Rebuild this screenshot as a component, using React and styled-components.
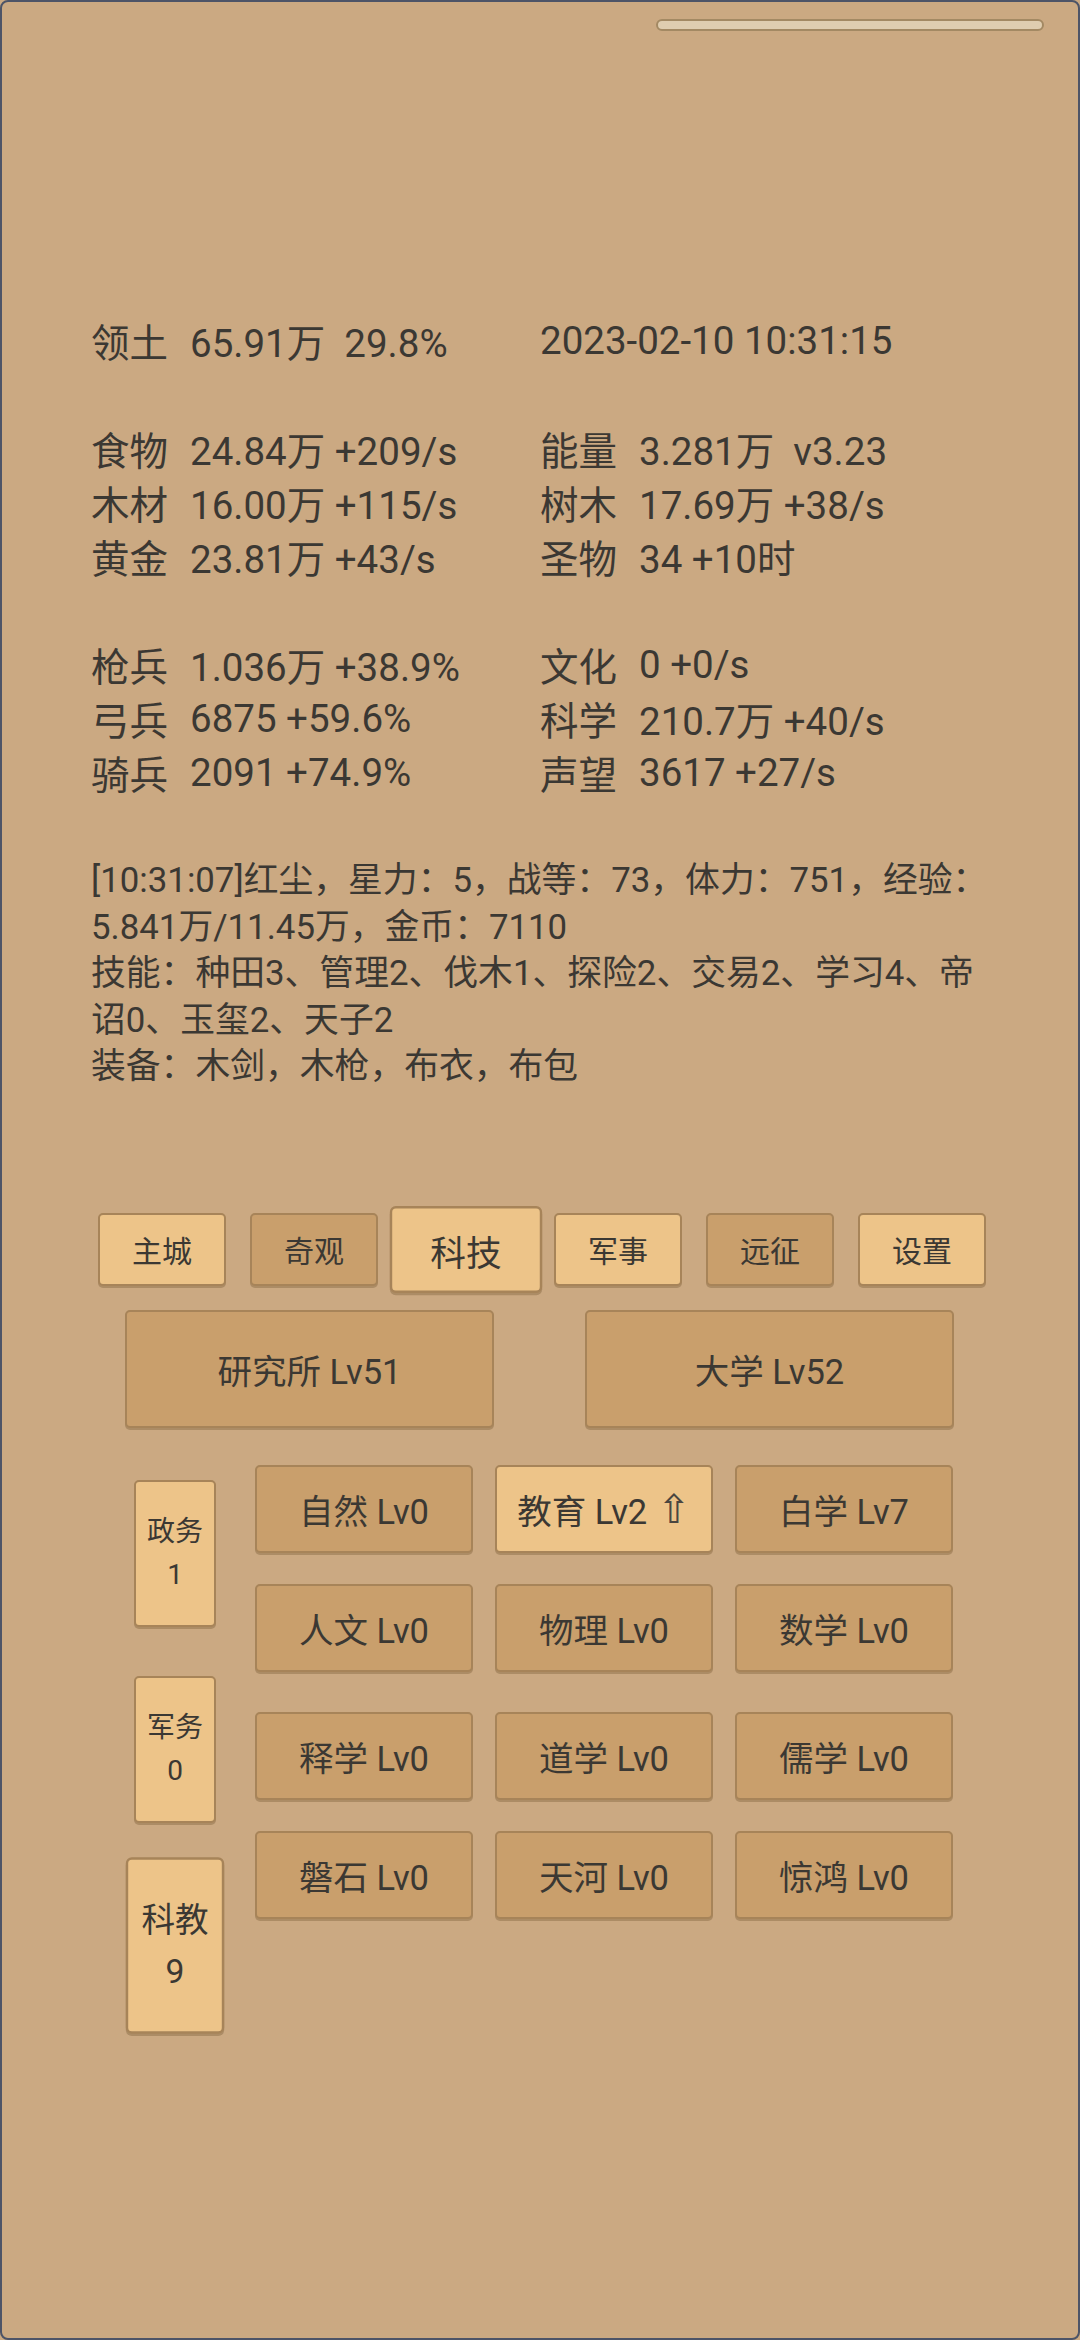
import React from "react";
import styled, { createGlobalStyle } from "styled-components";

const GlobalStyle = createGlobalStyle`
  html, body { margin: 0; padding: 0; background: #CBA982; }
  * { box-sizing: border-box; }
`;

const Screen = styled.div`
  width: 1080px;
  height: 2340px;
  background: #CBA982;
  border: 2px solid #4d5467;
  border-radius: 8px;
  overflow: hidden;
  font-family: Roboto, "Noto Sans CJK SC", sans-serif;
  color: #3b3833;
  display: flex;
  flex-direction: column;
`;

const TopBar = styled.div`
  display: flex;
  justify-content: flex-end;
  padding: 17px 34px 0 0;
`;

const Progress = styled.div`
  width: 388px;
  height: 12px;
  border-radius: 6px;
  background: #DFCDB0;
  border: 2px solid #A38963;
`;

const Stats = styled.div`
  margin-top: 282px;
  padding-left: 89px;
  display: grid;
  grid-template-columns: 449px 1fr;
  grid-auto-rows: 54px;
  font-size: 38.5px;
`;

const Cell = styled.div`
  display: flex;
  align-items: center;
  white-space: pre;
`;

const Label = styled.span`
  margin-right: 22px;
`;

const Spacer = styled.div`
  grid-column: 1 / span 2;
`;

const Log = styled.div`
  margin-top: 58px;
  padding-left: 89px;
  font-size: 34.8px;
  line-height: 46.5px;
  white-space: nowrap;
`;

const Tabs = styled.div`
  margin-top: 123px;
  margin-left: 84px;
  display: grid;
  grid-template-columns: repeat(6, 152px);
  height: 73px;
`;

const Btn = styled.div`
  display: flex;
  align-items: center;
  justify-content: center;
  text-align: center;
  background: ${(p) => (p.$light ? "#EDC489" : "#C99F6C")};
  border: 2px solid #A78459;
  border-radius: 5px;
  box-shadow: 0 2px 0 rgba(115, 85, 50, 0.35);
  color: #3b3833;
`;

const Tab = styled(Btn)`
  justify-self: center;
  width: 128px;
  height: 73px;
  font-size: 30px;
  transform: ${(p) => (p.$active ? "scale(1.19)" : "none")};
`;

const Buildings = styled.div`
  margin-top: 24px;
  padding-left: 123px;
  display: flex;
  gap: 91px;
`;

const Building = styled(Btn)`
  width: 369px;
  height: 118px;
  font-size: 34.5px;
`;

const Lower = styled.div`
  margin-top: 37px;
  padding-left: 132px;
  display: flex;
  gap: 39px;
`;

const SideCol = styled.div`
  display: flex;
  flex-direction: column;
  gap: 49px;
  padding-top: 15px;
`;

const SideBtn = styled(Btn)`
  width: 82px;
  height: 147px;
  font-size: 28px;
  line-height: 43px;
  flex-direction: column;
  transform: ${(p) => (p.$active ? "scale(1.2)" : "none")};
`;

const TechCol = styled.div`
  display: flex;
  flex-direction: column;
  gap: 40px;
`;

const TechGroup = styled.div`
  display: grid;
  grid-template-columns: repeat(3, 218px);
  grid-auto-rows: 88px;
  column-gap: 22px;
  row-gap: 31px;
`;

const Tech = styled(Btn)`
  font-size: 34.5px;
  white-space: pre;
`;

const Arrow = styled.span`
  font-family: "DejaVu Sans", sans-serif;
  font-size: 40px;
  line-height: 1;
  margin-left: 10px;
  color: #4a4640;
`;

const statRows = [
  [["领土", "65.91万  29.8%"], [null, "2023-02-10 10:31:15"]],
  null,
  [["食物", "24.84万 +209/s"], ["能量", "3.281万  v3.23"]],
  [["木材", "16.00万 +115/s"], ["树木", "17.69万 +38/s"]],
  [["黄金", "23.81万 +43/s"], ["圣物", "34 +10时"]],
  null,
  [["枪兵", "1.036万 +38.9%"], ["文化", "0 +0/s"]],
  [["弓兵", "6875 +59.6%"], ["科学", "210.7万 +40/s"]],
  [["骑兵", "2091 +74.9%"], ["声望", "3617 +27/s"]],
];

const tabs = [
  { t: "主城", light: true },
  { t: "奇观", light: false },
  { t: "科技", light: true, active: true },
  { t: "军事", light: true },
  { t: "远征", light: false },
  { t: "设置", light: true },
];

const techGroups = [
  [
    ["自然 Lv0"], ["教育 Lv2", true], ["白学 Lv7"],
    ["人文 Lv0"], ["物理 Lv0"], ["数学 Lv0"],
  ],
  [
    ["释学 Lv0"], ["道学 Lv0"], ["儒学 Lv0"],
    ["磐石 Lv0"], ["天河 Lv0"], ["惊鸿 Lv0"],
  ],
];

export default function App() {
  return (
    <>
      <GlobalStyle />
      <Screen>
        <TopBar>
          <Progress />
        </TopBar>
        <Stats>
          {statRows.map((row, i) =>
            row ? (
              row.map(([label, value], j) => (
                <Cell key={`${i}-${j}`}>
                  {label && <Label>{label}</Label>}
                  {value}
                </Cell>
              ))
            ) : (
              <Spacer key={i} />
            )
          )}
        </Stats>
        <Log>
          [10:31:07]红尘，星力：5，战等：73，体力：751，经验：
          <br />
          5.841万/11.45万，金币：7110
          <br />
          技能：种田3、管理2、伐木1、探险2、交易2、学习4、帝
          <br />
          诏0、玉玺2、天子2
          <br />
          装备：木剑，木枪，布衣，布包
        </Log>
        <Tabs>
          {tabs.map((tab) => (
            <Tab key={tab.t} $light={tab.light} $active={tab.active}>
              {tab.t}
            </Tab>
          ))}
        </Tabs>
        <Buildings>
          <Building>研究所 Lv51</Building>
          <Building>大学 Lv52</Building>
        </Buildings>
        <Lower>
          <SideCol>
            <SideBtn $light>
              <span>政务</span>
              <span>1</span>
            </SideBtn>
            <SideBtn $light>
              <span>军务</span>
              <span>0</span>
            </SideBtn>
            <SideBtn $light $active>
              <span>科教</span>
              <span>9</span>
            </SideBtn>
          </SideCol>
          <TechCol>
            {techGroups.map((group, gi) => (
              <TechGroup key={gi}>
                {group.map(([name, up]) => (
                  <Tech key={name} $light={up}>
                    {name}
                    {up && <Arrow>⇧</Arrow>}
                  </Tech>
                ))}
              </TechGroup>
            ))}
          </TechCol>
        </Lower>
      </Screen>
    </>
  );
}
